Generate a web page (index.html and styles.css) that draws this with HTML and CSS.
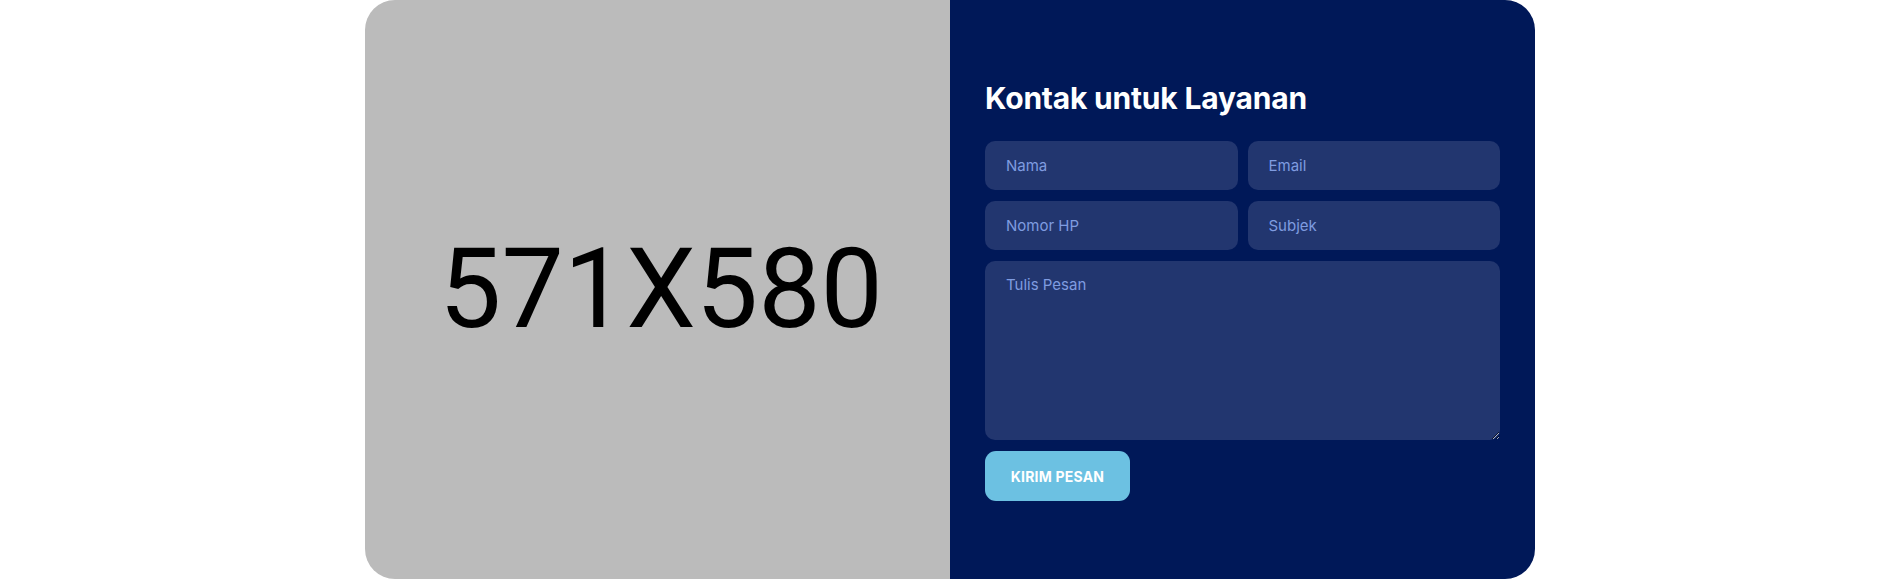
FILE: index.html
```html
<!DOCTYPE html>
<html lang="id">
<head>
<meta charset="utf-8">
<title>Kontak untuk Layanan</title>
<link rel="stylesheet" href="styles.css">
</head>
<body>
  <section class="contact">
    <div class="contact-card">
      <div class="contact-media">
        <span class="media-label">571X580</span>
      </div>
      <div class="contact-panel">
        <h2 class="contact-title">Kontak untuk Layanan</h2>
        <form class="contact-form">
          <input class="field" type="text" placeholder="Nama">
          <input class="field" type="email" placeholder="Email">
          <input class="field" type="text" placeholder="Nomor HP">
          <input class="field" type="text" placeholder="Subjek">
          <textarea class="field field-message" placeholder="Tulis Pesan"></textarea>
          <div class="form-actions">
            <button class="submit-btn" type="button">Kirim Pesan</button>
          </div>
        </form>
      </div>
    </div>
  </section>
</body>
</html>
```

FILE: styles.css
```css
* {
  box-sizing: border-box;
}

html, body {
  margin: 0;
  padding: 0;
  background: #ffffff;
}

body {
  font-family: "Inter", "Noto Sans", sans-serif;
  overflow: hidden;
}

.contact {
  display: flex;
  justify-content: center;
}

.contact-card {
  width: 1170px;
  height: 579px;
  display: grid;
  grid-template-columns: 585px 585px;
  border-radius: 30px;
  overflow: hidden;
}

.contact-media {
  background: #bbbbbb;
  display: flex;
  align-items: center;
  justify-content: center;
}

.media-label {
  font-family: "Roboto", "Liberation Sans", sans-serif;
  font-size: 111px;
  font-weight: 400;
  color: #000000;
  line-height: 1;
  padding-left: 7px;
}

.contact-panel {
  background: #001858;
  padding: 2px 35px 0;
  display: flex;
  flex-direction: column;
  justify-content: center;
}

.contact-title {
  margin: 0 0 25px;
  font-family: "Inter", "Noto Sans", sans-serif;
  font-size: 30px;
  font-weight: 700;
  line-height: 36px;
  color: #ffffff;
  letter-spacing: -0.2px;
}

.contact-form {
  display: grid;
  grid-template-columns: minmax(0, 1fr) minmax(0, 1fr);
  column-gap: 10px;
  row-gap: 11px;
}

.field {
  width: 100%;
  min-width: 0;
  height: 49px;
  border: none;
  outline: none;
  border-radius: 10px;
  background: #22366f;
  color: #ffffff;
  padding: 0 21px;
  font-family: "Inter", "Noto Sans", sans-serif;
  font-size: 15px;
}

.field::placeholder {
  color: #7f9ce0;
  opacity: 1;
}

.field-message {
  grid-column: 1 / -1;
  height: 179px;
  padding: 13px 21px;
  resize: vertical;
  line-height: 1.4;
}

.form-actions {
  grid-column: 1 / -1;
  display: flex;
}

.submit-btn {
  width: 145px;
  height: 50px;
  border: none;
  border-radius: 11px;
  background: #6cc1e2;
  color: #ffffff;
  font-family: "Inter", "Noto Sans", sans-serif;
  font-size: 14px;
  font-weight: 700;
  text-transform: uppercase;
  letter-spacing: 0.2px;
  cursor: pointer;
}
```
